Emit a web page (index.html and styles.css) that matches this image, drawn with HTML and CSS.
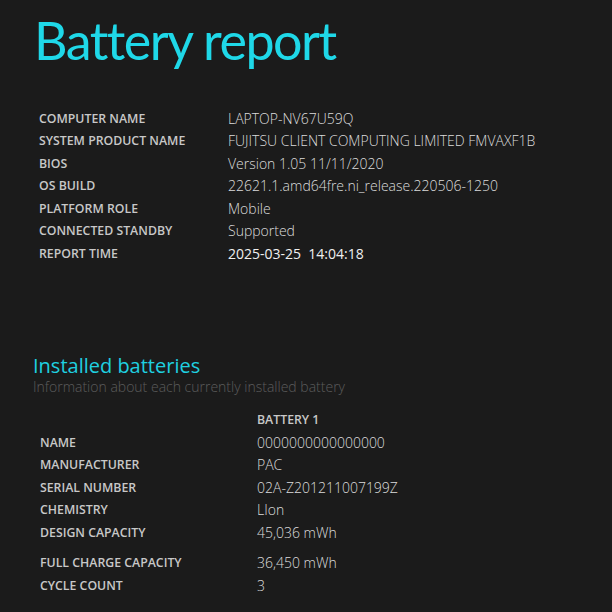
FILE: index.html
```html
<!DOCTYPE html>
<html lang="en">
<head>
    <meta charset="UTF-8">
    <title>Battery report</title>
    <link rel="stylesheet" href="styles.css">
</head>
<body>

    <h1>Battery report</h1>

    <table class="info-table">
        <tr><td class="label">COMPUTER NAME</td><td class="value">LAPTOP-NV67U59Q</td></tr>
        <tr><td class="label">SYSTEM PRODUCT NAME</td><td class="value">FUJITSU CLIENT COMPUTING LIMITED FMVAXF1B</td></tr>
        <tr><td class="label">BIOS</td><td class="value">Version 1.05 11/11/2020</td></tr>
        <tr><td class="label">OS BUILD</td><td class="value">22621.1.amd64fre.ni_release.220506-1250</td></tr>
        <tr><td class="label">PLATFORM ROLE</td><td class="value">Mobile</td></tr>
        <tr><td class="label">CONNECTED STANDBY</td><td class="value">Supported</td></tr>
        <tr><td class="label">REPORT TIME</td><td class="value strong">2025-03-25&nbsp;&nbsp;14:04:18</td></tr>
    </table>

    <h2>Installed batteries</h2>
    <div class="explanation">Information about each currently installed battery</div>

    <table class="battery-table">
        <thead>
            <tr><td></td><td class="label">BATTERY 1</td></tr>
        </thead>
        <tr><td class="label">NAME</td><td class="value">0000000000000000</td></tr>
        <tr><td class="label">MANUFACTURER</td><td class="value">PAC</td></tr>
        <tr><td class="label">SERIAL NUMBER</td><td class="value">02A-Z201211007199Z</td></tr>
        <tr><td class="label">CHEMISTRY</td><td class="value">LIon</td></tr>
        <tr class="spaced"><td class="label">DESIGN CAPACITY</td><td class="value">45,036 mWh</td></tr>
        <tr><td class="label">FULL CHARGE CAPACITY</td><td class="value">36,450 mWh</td></tr>
        <tr><td class="label">CYCLE COUNT</td><td class="value">3</td></tr>
    </table>

</body>
</html>
```

FILE: styles.css
```css
/* Battery report - dark */

body {
    font-family: 'Open Sans', 'Noto Sans', sans-serif;
    background-color: #1b1b1b;
    color: #d0d0d0;
    margin: 0;
    padding: 0 0 0 35px;
}

h1 {
    font-family: 'Lato', 'Open Sans', sans-serif;
    font-weight: 400;
    font-size: 52px;
    line-height: 1;
    letter-spacing: -1.5px;
    color: #1fd8e8;
    margin: 14px 0 41px -1px;
}

table {
    border-collapse: collapse;
}

td {
    padding: 0;
    height: 22.5px;
    vertical-align: middle;
}

.label {
    font-size: 12.3px;
    font-weight: 600;
    color: #c8c8c8;
    padding-left: 4px;
}

.value {
    font-size: 14px;
    font-weight: 300;
    color: #dcdcdc;
}

.value.strong {
    font-weight: 400;
    color: #f0f0f0;
}

.info-table .label { width: 189px; }

h2 {
    font-weight: 400;
    font-size: 20px;
    line-height: 1;
    color: #1fd0e0;
    margin: 91px 0 1px -2px;
}

.explanation {
    font-size: 14px;
    font-weight: 300;
    color: #5c5c5c;
    margin: 0 0 13px -2px;
}

.battery-table .label:first-child { width: 217px; padding-left: 5px; }
.battery-table thead .label { padding-left: 0; }
.battery-table .spaced td { padding-bottom: 8px; }
```
